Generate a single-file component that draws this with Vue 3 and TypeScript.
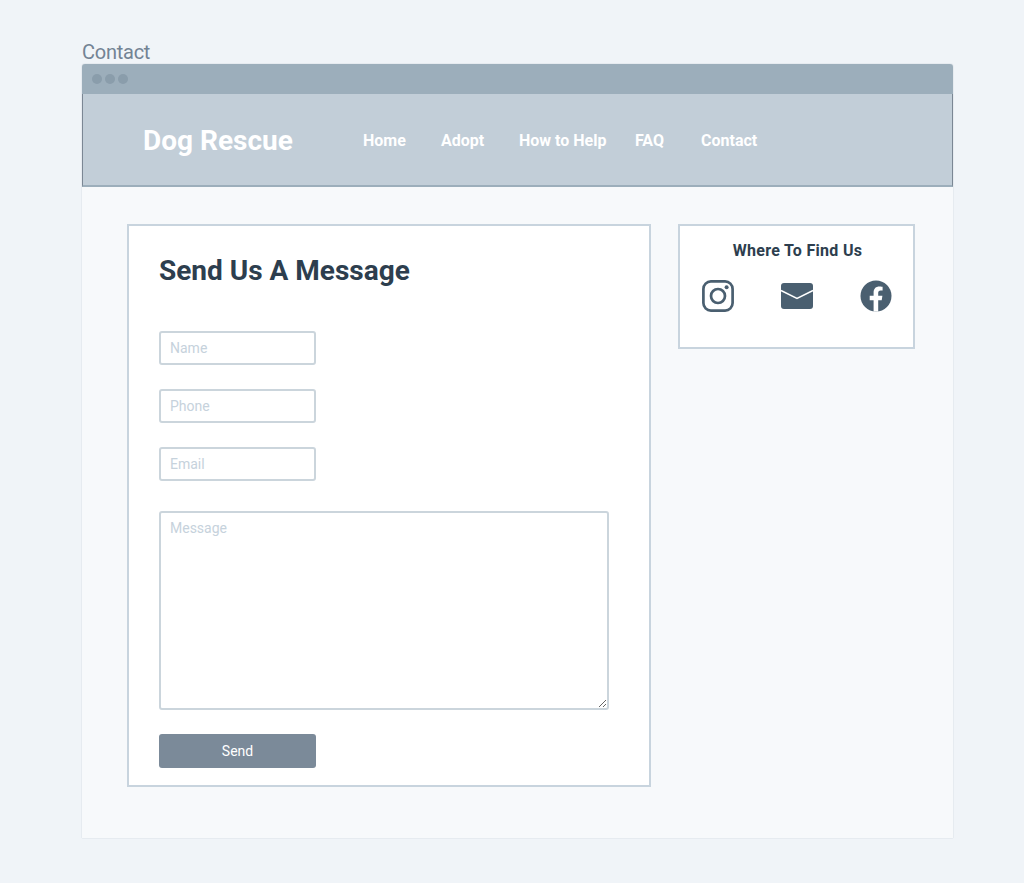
<script setup lang="ts">
const links = ['Home', 'Adopt', 'How to Help', 'FAQ', 'Contact']
const fields = ['Name', 'Phone', 'Email']
</script>

<template>
  <div class="page">
    <div class="page-title">Contact</div>
    <div class="window">
      <div class="titlebar">
        <span class="dot"></span>
        <span class="dot"></span>
        <span class="dot"></span>
      </div>
      <header class="nav">
        <div class="logo">Dog Rescue</div>
        <nav class="links">
          <a v-for="link in links" :key="link" class="link">{{ link }}</a>
        </nav>
      </header>
      <main class="content">
        <form class="card form" @submit.prevent>
          <h1>Send Us A Message</h1>
          <div class="inputs">
            <input v-for="field in fields" :key="field" type="text" :placeholder="field" />
          </div>
          <textarea placeholder="Message"></textarea>
          <button type="submit">Send</button>
        </form>
        <aside class="card side">
          <h2>Where To Find Us</h2>
          <div class="icons">
            <!-- instagram -->
            <svg width="34" height="34" viewBox="0 0 34 34">
              <rect x="2.4" y="2.4" width="29.2" height="29.2" rx="7.5" fill="none" stroke="#4a5f70" stroke-width="2.7" />
              <circle cx="17" cy="17" r="7" fill="none" stroke="#4a5f70" stroke-width="2.7" />
              <circle cx="25.6" cy="8.2" r="2" fill="#4a5f70" />
            </svg>
            <!-- mail -->
            <svg width="34" height="34" viewBox="0 0 34 34">
              <rect x="1" y="4" width="32" height="26" rx="3" fill="#4a5f70" />
              <path d="M1 11.5 L17 19.5 L33 11.5" fill="none" stroke="#fff" stroke-width="1.4" />
            </svg>
            <!-- facebook -->
            <svg width="34" height="34" viewBox="0 0 34 34">
              <circle cx="17" cy="17" r="15.5" fill="#4a5f70" />
              <path d="M14.6 32.4 V21.3 H10.7 V16.8 H14.6 V13.4 C14.6 9.5 16.9 7.4 20.4 7.4 C22.1 7.4 23.6 7.7 23.6 7.7 V11.5 H21.7 C19.8 11.5 19.2 12.7 19.2 13.9 V16.8 H23.4 L22.7 21.3 H19.2 V32.4 Z" fill="#fff" />
            </svg>
          </div>
        </aside>
      </main>
    </div>
  </div>
</template>

<style>
body {
  margin: 0;
  background: #f0f4f8;
}
</style>

<style scoped>
.page {
  box-sizing: border-box;
  height: 883px;
  padding: 41px 0 0 82px;
  font-family: Roboto, "Liberation Sans", sans-serif;
}

.page-title {
  font-size: 20px;
  line-height: 23px;
  letter-spacing: -0.25px;
  color: #738394;
}

.window {
  width: 871px;
  height: 774px;
  background: #f7f9fb;
  border-radius: 3px 3px 0 0;
  box-shadow: 0 0 1px rgba(70, 90, 110, 0.5);
}

.titlebar {
  display: flex;
  align-items: center;
  gap: 3px;
  height: 30px;
  padding-left: 10px;
  box-sizing: border-box;
  background: #9caebb;
  border-radius: 3px 3px 0 0;
}

.dot {
  width: 10px;
  height: 10px;
  border-radius: 50%;
  background: #8a9dab;
}

.nav {
  display: flex;
  align-items: center;
  height: 93px;
  box-sizing: border-box;
  padding-left: 60px;
  padding-top: 1px;
  background: #c2ced8;
  border-bottom: 2px solid #9caebb;
  border-right: 1px solid #7b8794;
  border-left: 1px solid #7b8794;
}

.logo {
  width: 220px;
  font-size: 28px;
  font-weight: 700;
  color: #fff;
}

.links {
  display: grid;
  grid-template-columns: 78px 78px 116px 66px auto;
}

.link {
  font-size: 16px;
  font-weight: 700;
  color: #fff;
}

.content {
  display: flex;
  align-items: flex-start;
  gap: 27px;
  padding: 37px 0 0 45px;
}

.card {
  box-sizing: border-box;
  background: #fff;
  border: 2px solid #c8d4de;
}

.form {
  display: flex;
  flex-direction: column;
  align-items: flex-start;
  width: 524px;
  height: 563px;
  padding: 28px 0 0 30px;
}

h1 {
  margin: 0 0 44px;
  font-size: 28px;
  line-height: 33px;
  font-weight: 700;
  color: #2d3e4e;
}

.inputs {
  display: flex;
  flex-direction: column;
  gap: 24px;
  margin-bottom: 30px;
}

input,
textarea {
  box-sizing: border-box;
  margin: 0;
  padding: 0 9px;
  background: #fff;
  border: 2px solid #cbd5dc;
  border-radius: 3px;
  font-family: inherit;
  font-size: 14px;
  outline: none;
}

input {
  width: 157px;
  height: 34px;
}

textarea {
  display: block;
  width: 450px;
  height: 199px;
  padding-top: 7px;
  margin-bottom: 24px;
}

input::placeholder,
textarea::placeholder {
  color: #c6d2dc;
  opacity: 1;
}

button {
  width: 157px;
  height: 34px;
  padding: 0;
  background: #7b8a99;
  border: none;
  border-radius: 3px;
  font-family: inherit;
  font-size: 14px;
  color: #fff;
}

.side {
  width: 237px;
  height: 125px;
  padding-top: 15px;
}

h2 {
  margin: 0;
  padding-left: 2px;
  text-align: center;
  font-size: 16px;
  line-height: 19px;
  font-weight: 700;
  letter-spacing: 0.3px;
  color: #2d3e4e;
}

.icons {
  display: flex;
  justify-content: space-between;
  padding: 19px 20px 0 21px;
}

svg {
  display: block;
}
</style>
